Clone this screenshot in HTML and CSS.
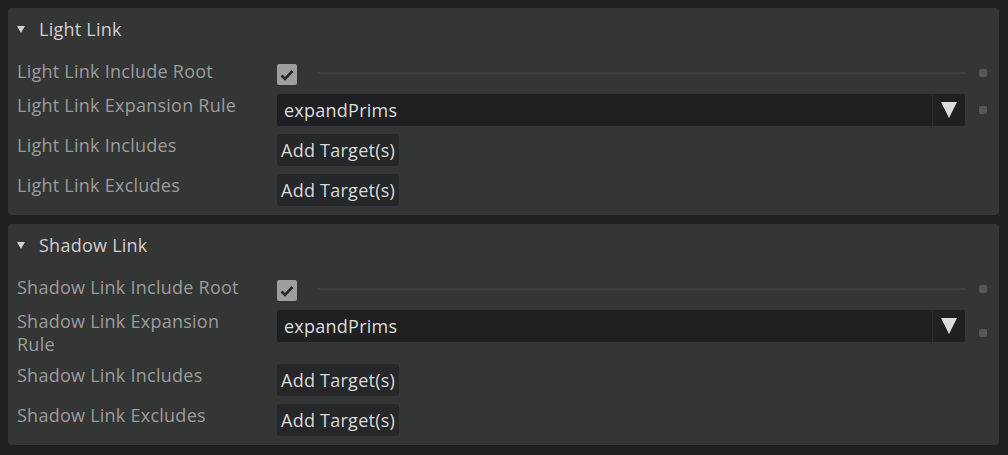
FILE: index.html
```html
<!DOCTYPE html>
<html lang="en">
<head>
    <meta charset="UTF-8">
    <title>Light Linking</title>
    <link rel="stylesheet" href="styles.css">
</head>
<body>
    <div class="frame">

        <div class="panel">
            <div class="panel-head"><span class="caret"></span>Light Link</div>
            <div class="rows">
                <div class="row">
                    <div class="label">Light Link Include Root</div>
                    <div class="control check-wrap">
                        <span class="check">
                            <svg width="14" height="12" viewBox="0 0 14 12"><path d="M1.5 6.5 L5 10 L12.5 2" fill="none" stroke="#262626" stroke-width="2.6"/></svg>
                        </span>
                        <span class="track"></span>
                    </div>
                    <div class="dot"></div>
                </div>
                <div class="row">
                    <div class="label">Light Link Expansion Rule</div>
                    <div class="control">
                        <div class="select">
                            <span class="value">expandPrims</span>
                            <span class="arrow"></span>
                        </div>
                    </div>
                    <div class="dot"></div>
                </div>
                <div class="row">
                    <div class="label">Light Link Includes</div>
                    <div class="control"><button class="btn">Add Target(s)</button></div>
                    <div></div>
                </div>
                <div class="row">
                    <div class="label">Light Link Excludes</div>
                    <div class="control"><button class="btn">Add Target(s)</button></div>
                    <div></div>
                </div>
            </div>
        </div>

        <div class="panel">
            <div class="panel-head"><span class="caret"></span>Shadow Link</div>
            <div class="rows">
                <div class="row">
                    <div class="label">Shadow Link Include Root</div>
                    <div class="control check-wrap">
                        <span class="check">
                            <svg width="14" height="12" viewBox="0 0 14 12"><path d="M1.5 6.5 L5 10 L12.5 2" fill="none" stroke="#262626" stroke-width="2.6"/></svg>
                        </span>
                        <span class="track"></span>
                    </div>
                    <div class="dot"></div>
                </div>
                <div class="row">
                    <div class="label">Shadow Link Expansion Rule</div>
                    <div class="control">
                        <div class="select">
                            <span class="value">expandPrims</span>
                            <span class="arrow"></span>
                        </div>
                    </div>
                    <div class="dot"></div>
                </div>
                <div class="row">
                    <div class="label">Shadow Link Includes</div>
                    <div class="control"><button class="btn">Add Target(s)</button></div>
                    <div></div>
                </div>
                <div class="row">
                    <div class="label">Shadow Link Excludes</div>
                    <div class="control"><button class="btn">Add Target(s)</button></div>
                    <div></div>
                </div>
            </div>
        </div>

    </div>
</body>
</html>
```

FILE: styles.css
```css
body {
    margin: 0;
    background-color: #1f2022;
    font-family: "Open Sans", "Noto Sans", sans-serif;
    letter-spacing: 0.25px;
}
.frame {
    padding: 8px 9px 0 8px;
}
.panel {
    background-color: #343535;
    border-radius: 4px;
    margin-bottom: 9px;
    padding-bottom: 9px;
}
.panel-head {
    height: 42px;
    line-height: 42px;
    padding-left: 9px;
    font-size: 18px;
    color: #cfcfcf;
    display: flex;
    align-items: center;
}
.caret {
    width: 0;
    height: 0;
    border-left: 4.5px solid transparent;
    border-right: 4.5px solid transparent;
    border-top: 7px solid #d2d2d2;
    margin-right: 14px;
}
.rows {
    padding: 10px 0 0 9px;
    display: flex;
    flex-direction: column;
    gap: 8px;
}
.row {
    display: grid;
    grid-template-columns: 260px 688px 34px;
    align-items: start;
}
.label {
    font-size: 18px;
    line-height: 23px;
    color: #9c9c9c;
    padding-right: 20px;
}
.row > .dot {
    align-self: center;
    justify-self: center;
    width: 8px;
    height: 8px;
    border-radius: 2px;
    background-color: #575757;
    margin-left: 2px;
}
.check-wrap {
    display: flex;
    align-items: center;
    height: 26px;
}
.check {
    width: 20px;
    height: 21px;
    margin-top: 3px;
    border-radius: 2px;
    background-color: #9e9e9e;
    display: flex;
    align-items: center;
    justify-content: center;
}
.track {
    flex: 1;
    height: 2px;
    background-color: #3f4041;
    margin-left: 20px;
    margin-right: -1px;
}
.select {
    height: 32px;
    background-color: #1f2022;
    border-radius: 2px;
    display: flex;
    align-items: center;
}
.value {
    flex: 1;
    padding-left: 7px;
    font-size: 18px;
    color: #dedede;
}
.arrow {
    width: 32px;
    height: 32px;
    border-left: 1px solid #2a2b2d;
    display: flex;
    align-items: center;
    justify-content: center;
}
.arrow::after {
    content: "";
    width: 0;
    height: 0;
    border-left: 8.5px solid transparent;
    border-right: 8.5px solid transparent;
    border-top: 16px solid #dcdcdc;
}
.btn {
    height: 32px;
    padding: 0 4px;
    border: none;
    border-radius: 3px;
    background-color: #262728;
    color: #dadada;
    font-family: "Open Sans", "Noto Sans", sans-serif;
    font-size: 18px;
    letter-spacing: 0.25px;
    cursor: pointer;
}
```
